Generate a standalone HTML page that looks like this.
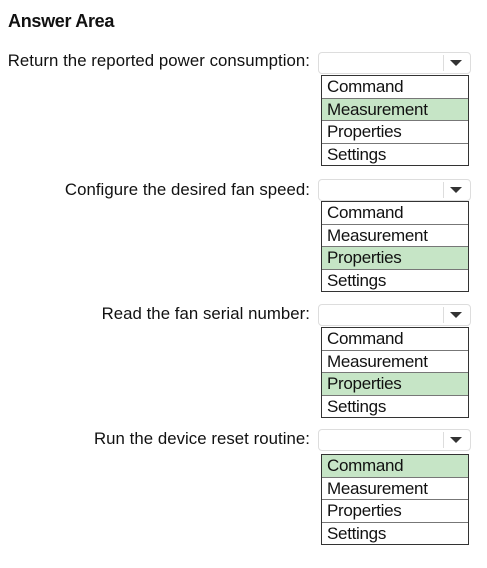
<!DOCTYPE html>
<html><head><style>
body{margin:0;width:487px;height:568px;background:#fff;font-family:"Liberation Sans",Arial,sans-serif;color:#111;position:relative;overflow:hidden}
.t{position:absolute;left:8px;top:11px;font-weight:bold;font-size:18px;letter-spacing:-0.3px}
.l{position:absolute;right:177px;font-size:16.8px;white-space:nowrap;letter-spacing:0.05px}
.s{position:absolute;left:318px;width:151px;height:20px;border:1px solid #ddd;border-radius:4px;background:#fff}
.s:after{content:"";position:absolute;right:26px;top:2px;bottom:2px;border-left:1px solid #ddd}
.s i{position:absolute;right:8px;top:7px;border-left:6px solid transparent;border-right:6px solid transparent;border-top:6px solid #333}
.b{position:absolute;left:321px;width:146px;border:1px solid #333;background:#fff}
.b div{height:21.5px;line-height:21px;font-size:17px;padding-left:5px;border-bottom:1px solid #777;letter-spacing:-0.3px}
.b div:last-child{border-bottom:none}
.b .g{background:#c6e5c6}
</style></head><body>
<div class="t">Answer Area</div>

<div class="l" style="top:51px">Return the reported power consumption:</div>
<div class="s" style="top:52px"><i></i></div>
<div class="b" style="top:75px"><div>Command</div><div class="g">Measurement</div><div>Properties</div><div>Settings</div></div>

<div class="l" style="top:180px">Configure the desired fan speed:</div>
<div class="s" style="top:179px"><i></i></div>
<div class="b" style="top:201px"><div>Command</div><div>Measurement</div><div class="g">Properties</div><div>Settings</div></div>

<div class="l" style="top:304px">Read the fan serial number:</div>
<div class="s" style="top:304px"><i></i></div>
<div class="b" style="top:327px"><div>Command</div><div>Measurement</div><div class="g">Properties</div><div>Settings</div></div>

<div class="l" style="top:429px">Run the device reset routine:</div>
<div class="s" style="top:429px"><i></i></div>
<div class="b" style="top:454px"><div class="g">Command</div><div>Measurement</div><div>Properties</div><div>Settings</div></div>
</body></html>
